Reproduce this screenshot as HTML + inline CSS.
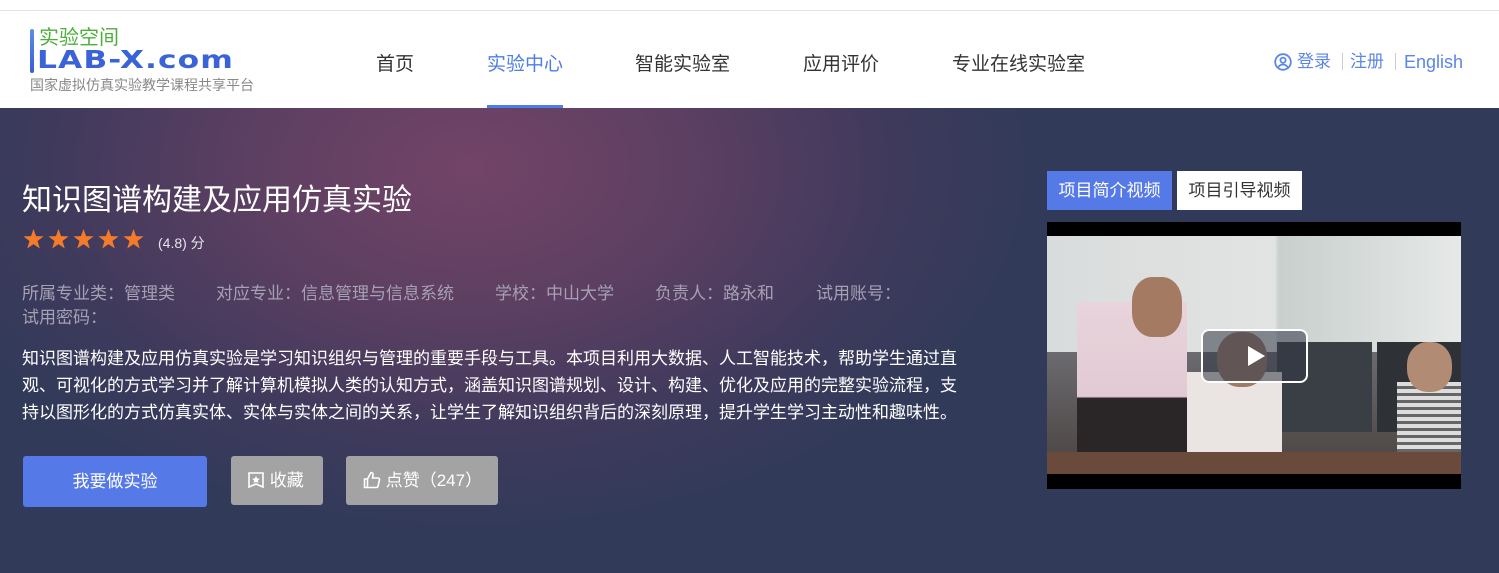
<!DOCTYPE html>
<html><head><meta charset="utf-8"><style>
*{margin:0;padding:0;box-sizing:border-box}
body{width:1499px;height:573px;overflow:hidden;font-family:"Liberation Sans","Noto Sans CJK SC",sans-serif;background:#333a5a;position:relative}
.hdr{position:absolute;left:0;top:0;width:1499px;height:108px;background:#fff;border-top:1px solid #fff}
.hdr:before{content:"";position:absolute;left:0;top:9px;width:100%;height:1px;background:#e3e3e3}
.nav{position:absolute;top:48px;font-size:19px;color:#333}
.hero{position:absolute;left:0;top:108px;width:1499px;height:465px;background:radial-gradient(ellipse 560px 360px at 470px 60px,#734467 0%,#5c3f62 40%,#3f3a5c 75%,#323a5a 100%)}
.abs{position:absolute}
.meta{font-size:17px;color:#a6a0b4}
.lg{position:absolute;top:49px;font-size:17px;line-height:24px;color:#5b86e5}
.star{position:absolute;top:229px;width:21px;height:21px;background:#f57b2b;clip-path:polygon(50% 0,62% 34%,98% 35%,69% 57%,80% 93%,50% 72%,20% 93%,31% 57%,2% 35%,38% 34%)}
</style></head><body>
<div class="hdr">
 <div class="abs" style="left:30px;top:28px;width:4px;height:44px;background:linear-gradient(#5c8ee6,#3a5cd6);border-radius:2px"></div>
 <div class="abs" style="left:39px;top:25px;font-size:20px;color:#4caf3a;line-height:24px">实验空间</div>
 <div class="abs" style="left:37px;top:45px;font-size:29px;color:#3a63d8;line-height:32px;letter-spacing:1px;font-family:'DejaVu Sans',sans-serif;font-weight:bold;transform:scale(1.08,0.85);transform-origin:top left">LAB-X.com</div>
 <div class="abs" style="left:30px;top:76px;font-size:14px;color:#888;line-height:17px">国家虚拟仿真实验教学课程共享平台</div>
 <div class="nav" style="left:376px">首页</div>
 <div class="nav" style="left:487px;color:#4d7de8">实验中心</div>
 <div class="abs" style="left:487px;top:104px;width:76px;height:4px;background:#4d7de8"></div>
 <div class="nav" style="left:635px">智能实验室</div>
 <div class="nav" style="left:803px">应用评价</div>
 <div class="nav" style="left:952px">专业在线实验室</div>
 <svg class="abs" style="left:1274px;top:52px" width="18" height="18" viewBox="0 0 18 18" fill="none" stroke="#5b86e5" stroke-width="1.8"><circle cx="9" cy="9" r="7.8"/><circle cx="9" cy="7.2" r="2.6"/><path d="M4.2 14.5c1.2-2.2 2.8-3 4.8-3s3.6.8 4.8 3"/></svg>
 <div class="lg" style="left:1297px">登录</div>
 <div class="abs" style="left:1342px;top:52px;width:1px;height:17px;background:#ccc"></div>
 <div class="lg" style="left:1350px">注册</div>
 <div class="abs" style="left:1395px;top:52px;width:1px;height:17px;background:#ccc"></div>
 <div class="lg" style="left:1404px;font-size:18px">English</div>
</div>
<div class="hero"></div>
<div class="abs" style="left:22px;top:175px;font-size:30px;color:#fff">知识图谱构建及应用仿真实验</div>
<div class="star" style="left:23px"></div><div class="star" style="left:48px"></div><div class="star" style="left:73px"></div><div class="star" style="left:98px"></div><div class="star" style="left:123px"></div>
<div class="abs" style="left:158px;top:233px;font-size:14px;color:#e8e4ee">(4.8) 分</div>
<div class="abs meta" style="left:22px;top:279px">所属专业类：管理类</div>
<div class="abs meta" style="left:216px;top:279px">对应专业：信息管理与信息系统</div>
<div class="abs meta" style="left:495px;top:279px">学校：中山大学</div>
<div class="abs meta" style="left:655px;top:279px">负责人：路永和</div>
<div class="abs meta" style="left:816px;top:279px">试用账号：</div>
<div class="abs meta" style="left:22px;top:303px">试用密码：</div>
<div class="abs" style="left:22px;top:345px;width:940px;font-size:17px;line-height:27px;color:#fff">知识图谱构建及应用仿真实验是学习知识组织与管理的重要手段与工具。本项目利用大数据、人工智能技术，帮助学生通过直观、可视化的方式学习并了解计算机模拟人类的认知方式，涵盖知识图谱规划、设计、构建、优化及应用的完整实验流程，支持以图形化的方式仿真实体、实体与实体之间的关系，让学生了解知识组织背后的深刻原理，提升学生学习主动性和趣味性。</div>
<div class="abs" style="left:23px;top:456px;width:184px;height:51px;background:#5679e8;border-radius:3px;color:#fff;font-size:17px;line-height:51px;text-align:center">我要做实验</div>
<div class="abs" style="left:231px;top:456px;width:92px;height:49px;background:#a3a3a3;border-radius:3px;color:#fff;font-size:17px;line-height:49px;padding-left:16px">
 <svg style="vertical-align:-3px" width="18" height="18" viewBox="0 0 18 18" fill="none" stroke="#fff" stroke-width="1.6"><path d="M2 2h14v14l-7-3-7 3z"/><path d="M9 5l1.2 2.4 2.6.3-1.9 1.8.5 2.6L9 10.8l-2.4 1.3.5-2.6-1.9-1.8 2.6-.3z" fill="#fff" stroke="none"/></svg> 收藏</div>
<div class="abs" style="left:346px;top:456px;width:152px;height:49px;background:#a3a3a3;border-radius:3px;color:#fff;font-size:17px;line-height:49px;padding-left:17px">
 <svg style="vertical-align:-3px" width="18" height="18" viewBox="0 0 18 18" fill="none" stroke="#fff" stroke-width="1.6"><path d="M1.5 8h3v8.5h-3zM4.5 8l3.5-6.5c1.5 0 2.3 1 2 2.5L9.5 7h5.5c1 0 1.7.9 1.5 1.8l-1.5 6.4c-.2.8-.9 1.3-1.7 1.3H4.5"/></svg> 点赞（247）</div>
<div class="abs" style="left:1047px;top:171px;width:125px;height:39px;background:#5679e8;color:#fff;font-size:17px;line-height:39px;text-align:center">项目简介视频</div>
<div class="abs" style="left:1177px;top:171px;width:125px;height:39px;background:#fff;color:#333;font-size:17px;line-height:39px;text-align:center">项目引导视频</div>
<div class="abs" style="left:1047px;top:222px;width:414px;height:267px;background:#000;overflow:hidden">
 <div class="abs" style="left:0;top:14px;width:414px;height:238px;background:linear-gradient(90deg,#d9dcdc 0%,#e2e4e3 55%,#c8cfcd 56%,#e6e9e8 100%)"></div>
 <div class="abs" style="left:0;top:130px;width:414px;height:122px;background:linear-gradient(#6b6b6f,#4a4240)"></div>
 <div class="abs" style="left:230px;top:120px;width:95px;height:90px;background:#3a3e45"></div>
 <div class="abs" style="left:330px;top:120px;width:84px;height:90px;background:#2e3136"></div>
 <div class="abs" style="left:30px;top:80px;width:110px;height:172px;background:linear-gradient(#e8d4dc 0%,#e2cad3 55%,#2a2628 56%)"></div>
 <div class="abs" style="left:85px;top:55px;width:50px;height:60px;background:#a57a62;border-radius:40%"></div>
 <div class="abs" style="left:140px;top:150px;width:95px;height:102px;background:#eae4e2"></div>
 <div class="abs" style="left:170px;top:110px;width:50px;height:55px;background:#9d7b68;border-radius:45%"></div>
 <div class="abs" style="left:350px;top:160px;width:64px;height:92px;background:repeating-linear-gradient(#ddd 0 4px,#666 4px 7px)"></div>
 <div class="abs" style="left:360px;top:120px;width:45px;height:50px;background:#b28b74;border-radius:45%"></div>
 <div class="abs" style="left:0;top:230px;width:414px;height:22px;background:#6a4a3a"></div>
 <div class="abs" style="left:154px;top:107px;width:107px;height:54px;border:2px solid #fff;border-radius:8px;background:rgba(50,55,70,.55)"></div>
 <div class="abs" style="left:201px;top:124px;width:0;height:0;border-left:17px solid #fff;border-top:10px solid transparent;border-bottom:10px solid transparent"></div>
</div>
</body></html>
